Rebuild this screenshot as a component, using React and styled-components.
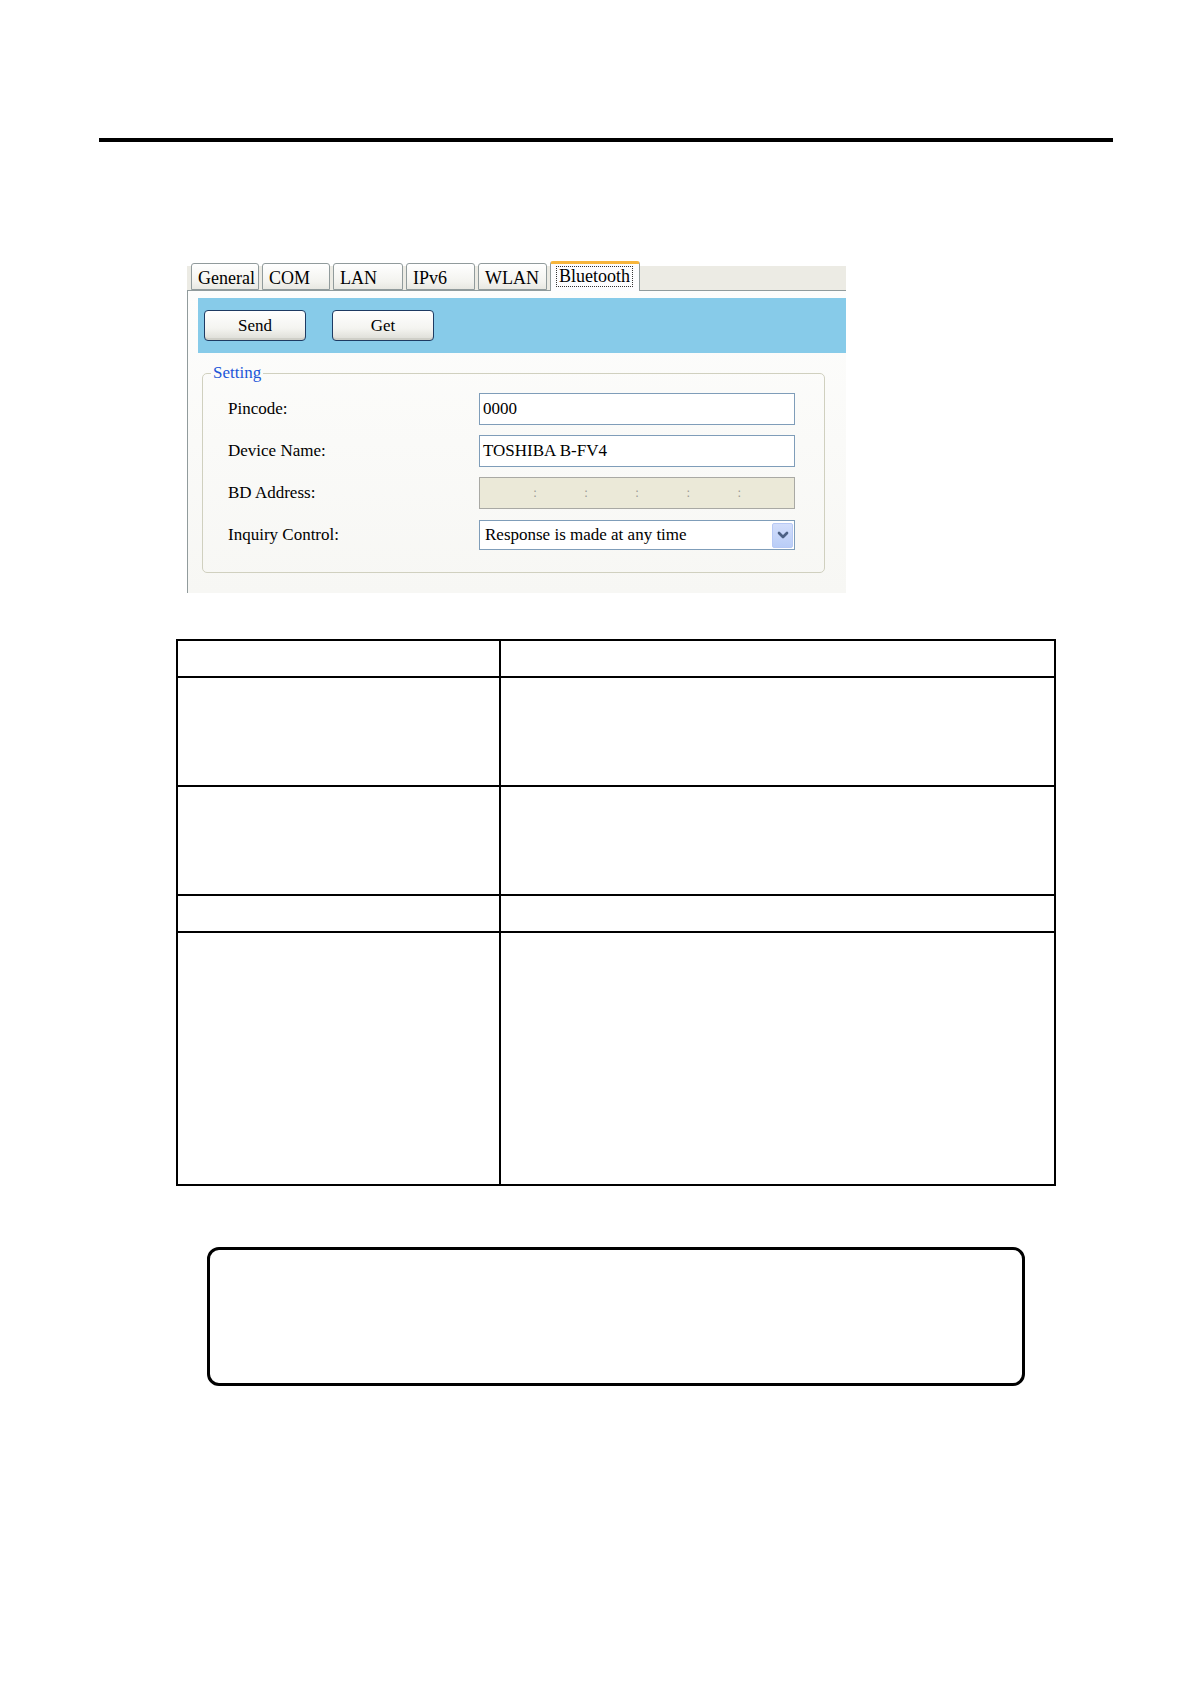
import React from 'react';
import styled, { createGlobalStyle } from 'styled-components';
import { ChevronDown } from 'lucide-react';

const GlobalStyle = createGlobalStyle`
  html, body {
    margin: 0;
    padding: 0;
    background: #ffffff;
  }
  body {
    font-family: "Liberation Serif", "DejaVu Serif", serif;
    color: #000;
  }
`;

const Page = styled.div`
  width: 1190px;
  min-height: 1684px;
  padding-top: 138px;
  box-sizing: border-box;
`;

const TopRule = styled.div`
  margin-left: 99px;
  width: 1014px;
  height: 4px;
  background: #000;
`;

const Panel = styled.div`
  margin: 119px 0 0 187px;
  width: 659px;
  height: 332px;
  display: flex;
  flex-direction: column;
  background: #ffffff;
`;

const TabStrip = styled.div`
  height: 29px;
  display: flex;
  align-items: flex-end;
  gap: 3px;
  padding-left: 4px;
  background: linear-gradient(#ffffff 0, #ffffff 5px, #ecebe4 5px);
  position: relative;
  z-index: 1;
`;

const Tab = styled.div`
  box-sizing: border-box;
  width: ${p => p.$w}px;
  height: ${p => (p.$active ? 30 : 27)}px;
  margin-bottom: ${p => (p.$active ? -1 : 0)}px;
  padding: ${p => (p.$active ? '2px 0 0 5px' : '4px 0 0 6px')};
  font-size: 18px;
  line-height: 20px;
  border: 1px solid #919b9c;
  border-bottom: ${p => (p.$active ? 'none' : '1px solid #919b9c')};
  border-top: ${p => (p.$active ? '3px solid #f7b53b' : '1px solid #919b9c')};
  border-radius: 3px 3px 0 0;
  background: ${p => (p.$active ? '#fcfcfe' : 'linear-gradient(#ffffff, #f3f3ef 70%, #e8e8e2)')};
  white-space: nowrap;
`;

const FocusText = styled.span`
  display: inline-block;
  padding: 0 2px;
  border: 1px dotted #333;
  line-height: 19px;
`;

const Body = styled.div`
  flex: 1;
  border-left: 1px solid #919b9c;
  border-top: 1px solid #919b9c;
  background: linear-gradient(#fdfdfc, #f7f7f4);
  display: flex;
  flex-direction: column;
  padding: 7px 0 0 10px;
`;

const ActionBar = styled.div`
  height: 55px;
  background: #87cbe9;
  display: flex;
  align-items: flex-start;
  gap: 26px;
  padding: 12px 0 0 6px;
  box-sizing: border-box;
`;

const Button = styled.button`
  width: 102px;
  height: 31px;
  box-sizing: border-box;
  border: 1px solid #1e3b63;
  border-radius: 4px;
  background: linear-gradient(#ffffff, #f4f4f0 60%, #dcdcd6);
  box-shadow: inset 0 -2px 0 #cfcfc8;
  font-family: "Liberation Serif", "DejaVu Serif", serif;
  font-size: 17px;
  color: #000;
  padding: 0;
`;

const Group = styled.fieldset`
  margin: 11px 0 0 4px;
  width: 623px;
  box-sizing: border-box;
  border: 1px solid #d0d0bf;
  border-radius: 5px;
  padding: 11px 0 21px 25px;
`;

const Legend = styled.legend`
  margin-left: -17px;
  padding: 0 2px;
  font-size: 17px;
  line-height: 18px;
  color: #1c56d8;
`;

const Rows = styled.div`
  display: flex;
  flex-direction: column;
  gap: 10px;
`;

const Row = styled.div`
  display: flex;
  align-items: center;
  height: 32px;
`;

const Label = styled.div`
  width: 251px;
  font-size: 17px;
`;

const Field = styled.div`
  box-sizing: border-box;
  width: 316px;
  height: ${p => (p.$h || 32)}px;
  border: 1px solid ${p => (p.$disabled ? '#a9a9a4' : '#7f9db9')};
  background: ${p => (p.$disabled ? '#ebe9d8' : '#ffffff')};
  font-size: 17px;
  display: flex;
  align-items: center;
  padding-left: 3px;
  white-space: nowrap;
`;

const AddressDots = styled.div`
  display: flex;
  padding-left: 50px;
  gap: 47px;
  color: #9a9a94;
  font-size: 12px;
  font-family: "DejaVu Sans", sans-serif;
`;

const SelectText = styled.span`
  flex: 1;
  padding-left: 2px;
`;

const DropButton = styled.div`
  width: 21px;
  height: 25px;
  margin-right: 1px;
  box-sizing: border-box;
  border: 1px solid #b7c9f5;
  border-radius: 2px;
  background: linear-gradient(#d3defb, #b9cdf7);
  display: flex;
  align-items: center;
  justify-content: center;
  color: #4d6185;
`;

const Grid = styled.table`
  margin: 46px 0 0 176px;
  width: 880px;
  border-collapse: collapse;
`;

const Cell = styled.td`
  border: 2px solid #000;
  height: ${p => p.$h}px;
  width: ${p => p.$w || 'auto'};
  padding: 0;
`;

const NoteBox = styled.div`
  margin: 61px 0 0 207px;
  width: 818px;
  height: 139px;
  box-sizing: border-box;
  border: 3px solid #000;
  border-radius: 12px;
`;

const tabs = [
  { name: 'General', w: 68 },
  { name: 'COM', w: 68 },
  { name: 'LAN', w: 70 },
  { name: 'IPv6', w: 69 },
  { name: 'WLAN', w: 69 },
  { name: 'Bluetooth', w: 90, active: true },
];

const rowHeights = [35, 107, 107, 35, 251];

export default function App() {
  return (
    <Page>
      <GlobalStyle />
      <TopRule />

      <Panel>
        <TabStrip>
          {tabs.map(t => (
            <Tab key={t.name} $w={t.w} $active={t.active}>
              {t.active ? <FocusText>{t.name}</FocusText> : t.name}
            </Tab>
          ))}
        </TabStrip>

        <Body>
          <ActionBar>
            <Button>Send</Button>
            <Button>Get</Button>
          </ActionBar>

          <Group>
            <Legend>Setting</Legend>
            <Rows>
              <Row>
                <Label>Pincode:</Label>
                <Field>0000</Field>
              </Row>
              <Row>
                <Label>Device Name:</Label>
                <Field>TOSHIBA B-FV4</Field>
              </Row>
              <Row>
                <Label>BD Address:</Label>
                <Field $disabled>
                  <AddressDots>
                    <span>:</span>
                    <span>:</span>
                    <span>:</span>
                    <span>:</span>
                    <span>:</span>
                  </AddressDots>
                </Field>
              </Row>
              <Row>
                <Label>Inquiry Control:</Label>
                <Field $h={30}>
                  <SelectText>Response is made at any time</SelectText>
                  <DropButton>
                    <ChevronDown size={16} strokeWidth={4} />
                  </DropButton>
                </Field>
              </Row>
            </Rows>
          </Group>
        </Body>
      </Panel>

      <Grid>
        <tbody>
          {rowHeights.map((h, i) => (
            <tr key={i}>
              <Cell $h={h} $w="321px" />
              <Cell $h={h} />
            </tr>
          ))}
        </tbody>
      </Grid>

      <NoteBox />
    </Page>
  );
}
